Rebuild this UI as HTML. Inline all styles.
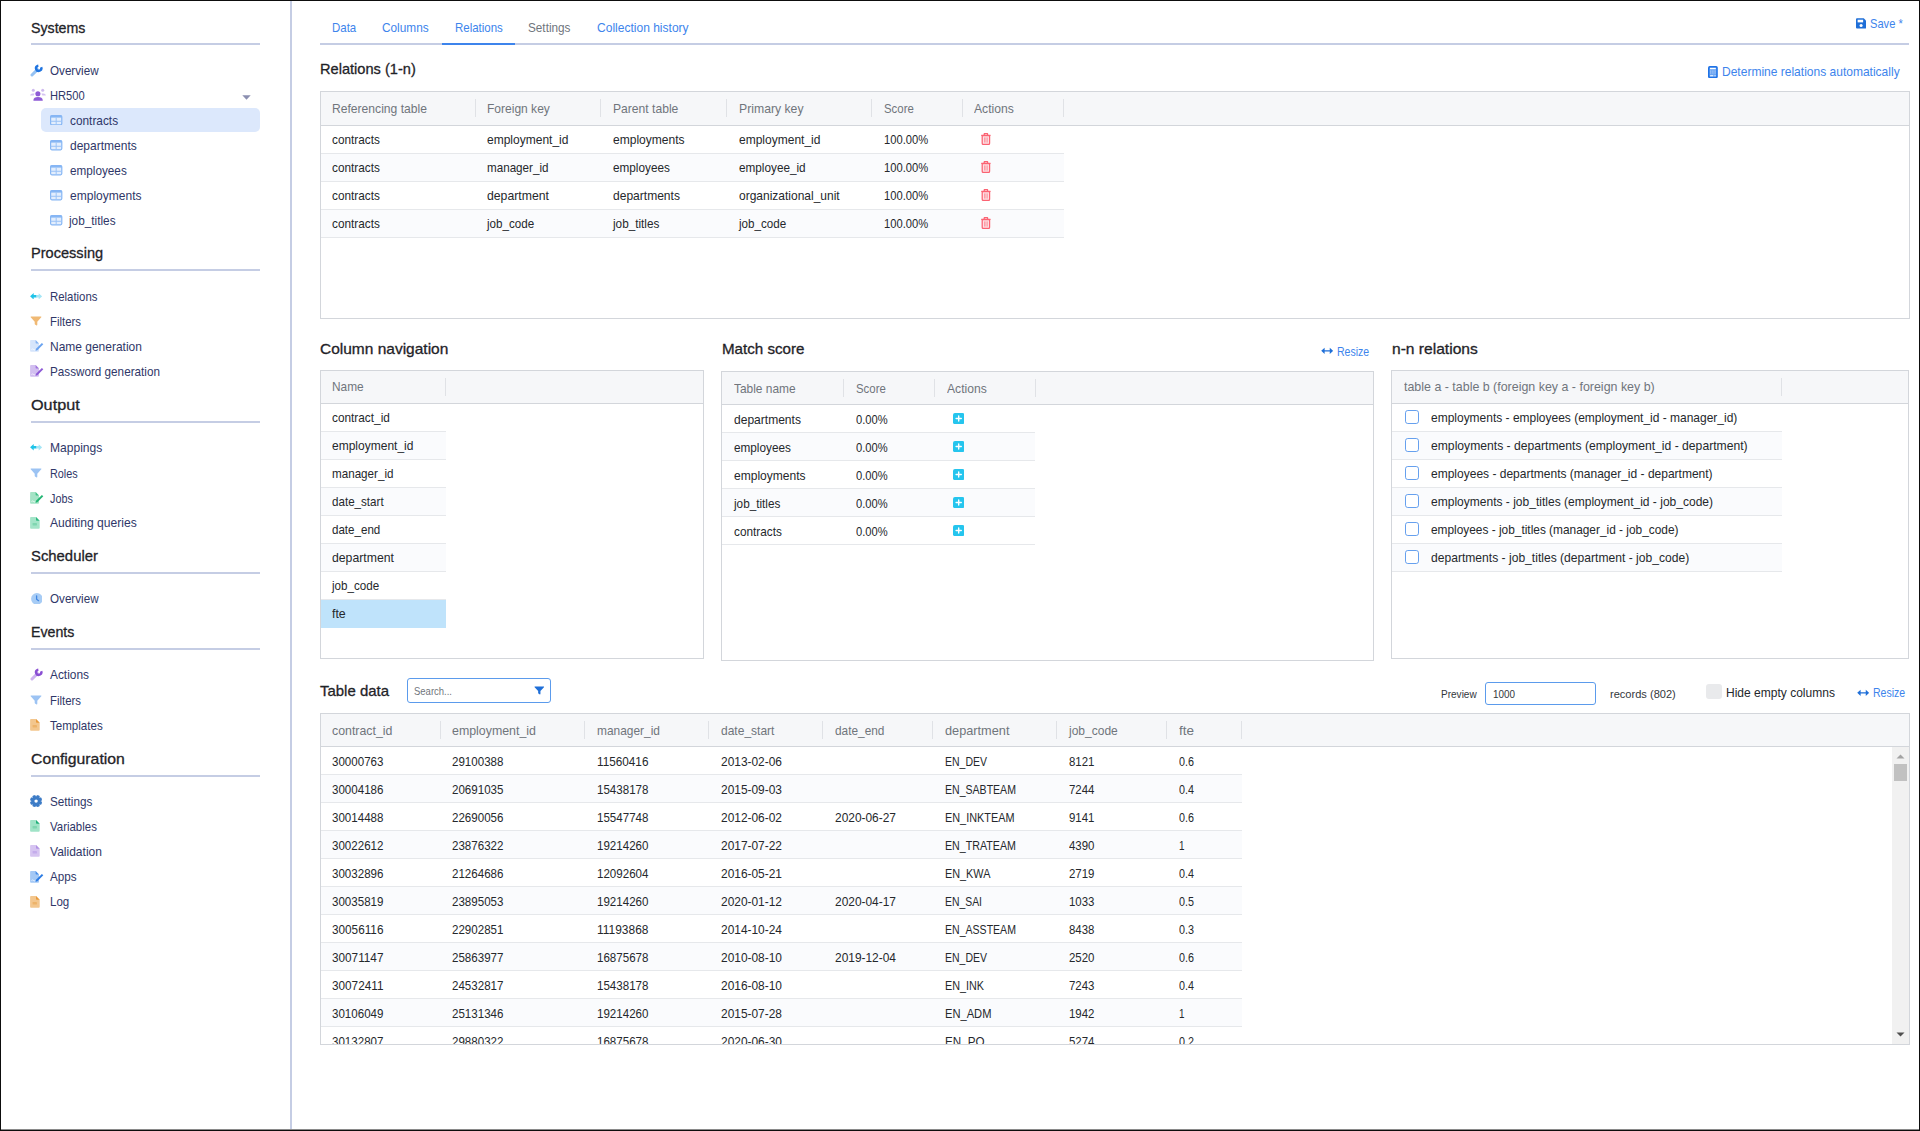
<!DOCTYPE html><html lang="en"><head><meta charset="utf-8"><title>Relations</title><style>
*{box-sizing:border-box;margin:0;padding:0}
html,body{width:1920px;height:1131px;overflow:hidden;background:#fff}
body{position:relative;font-family:"Liberation Sans",sans-serif;font-size:12.7px;color:#222}
.abs,.t,.h,.it,.hd,.c,svg.i{position:absolute}
.t,.h,.it,.hd,.c{transform-origin:0 50%}
.frame{position:absolute;left:0;top:0;width:1920px;height:1131px;border:1px solid #0d0d0d;box-shadow:inset 0 -1px 0 #8a8a8a;z-index:50}
.t{white-space:nowrap;line-height:16px;height:16px}
.h{white-space:nowrap;font-size:15px;line-height:20px;height:20px;color:#1f2328;-webkit-text-stroke:0.3px #1f2328}
.it{white-space:nowrap;line-height:16px;height:16px;color:#2f3768}
.rule{position:absolute;left:31px;width:229px;height:2px;background:#c5cde4}
.grid{position:absolute;border:1px solid #d3d6db;background:#fff;overflow:hidden}
.gh{position:absolute;left:0;top:0;right:0;background:#f6f7f9;border-bottom:1px solid #d3d6db}
.hd{white-space:nowrap;line-height:16px;color:#70757c}
.sep{position:absolute;width:1px;height:18px;background:#e0e2e6;margin-top:-1px}
.row{position:absolute;left:0;height:28px;border-bottom:1px solid #e6e8eb;background:#fff}
.row.alt{background:#fafbfd}
.c{white-space:nowrap;line-height:16px;top:6px;color:#25282c}
</style></head><body>
<div class="abs" style="left:290px;top:0;width:2px;height:1131px;background:#c5cde4"></div>
<div class="h" style="left:31px;top:18px;transform:scaleX(0.9459);">Systems</div>
<div class="rule" style="top:43px"></div>
<div class="abs" style="left:41px;top:107.5px;width:219px;height:24.5px;background:#dce8fc;border-radius:5px"></div>
<svg class="i" style="left:30px;top:63.6px" width="13" height="13" viewBox="0 0 13 13" ><path d="M2 11 L7.4 5.6" stroke="#95c2f3" stroke-width="3" stroke-linecap="round" fill="none"/><circle cx="8.7" cy="4.3" r="2.6" fill="none" stroke="#1f74e0" stroke-width="2.5" stroke-dasharray="12.6 3.74" transform="rotate(-22 8.7 4.3)"/></svg>
<div class="it" style="left:50px;top:62px;transform:translateY(0.6px) scaleX(0.9182);">Overview</div>
<svg class="i" style="left:30px;top:88px" width="16" height="13" viewBox="0 0 16 13" ><circle cx="3.3" cy="2.2" r="1.5" fill="#cfbaef"/><circle cx="12.7" cy="2.2" r="1.5" fill="#cfbaef"/><path d="M0.1 7.4 Q0.3 5.4 2.6 5.4 L4.6 5.4 L3.6 7.4Z" fill="#d5c3f1"/><path d="M15.9 7.4 Q15.7 5.4 13.4 5.4 L11.4 5.4 L12.4 7.4Z" fill="#d5c3f1"/><circle cx="7.9" cy="5.8" r="2.55" fill="#8f5bd6"/><path d="M3.4 12.2 Q3.6 9 8 9 Q12.4 9 12.8 12.2 Q12.8 12.8 12.2 12.8 L4 12.8 Q3.4 12.8 3.4 12.2Z" fill="#8f5bd6"/></svg>
<div class="it" style="left:50px;top:87px;transform:translateY(0.6px) scaleX(0.8777);">HR500</div>
<svg class="i" style="left:241.5px;top:94.8px" width="9" height="5" viewBox="0 0 9 5" ><path d="M0.3 0.2 H8.7 L4.5 4.8Z" fill="#8b8fb0"/></svg>
<svg class="i" style="left:50.2px;top:114.7px" width="12.4" height="10.4" viewBox="0 0 12.4 10.4" ><rect x="0.6" y="0.6" width="11.2" height="9.2" rx="1.2" fill="#e3eefd" stroke="#86b6f4" stroke-width="1.2"/><rect x="0.6" y="0.6" width="11.2" height="2" fill="#86b6f4"/><path d="M6.2 2.6 V9.8 M0.6 6.3 H11.8" stroke="#9cc3f6" stroke-width="1" fill="none"/></svg>
<div class="it" style="left:70px;top:112px;transform:translateY(0.6px) scaleX(0.9335);">contracts</div>
<svg class="i" style="left:50.2px;top:140.2px" width="12.4" height="10.4" viewBox="0 0 12.4 10.4" ><rect x="0.6" y="0.6" width="11.2" height="9.2" rx="1.2" fill="#e3eefd" stroke="#86b6f4" stroke-width="1.2"/><rect x="0.6" y="0.6" width="11.2" height="2" fill="#86b6f4"/><path d="M6.2 2.6 V9.8 M0.6 6.3 H11.8" stroke="#9cc3f6" stroke-width="1" fill="none"/></svg>
<div class="it" style="left:70px;top:138px;transform:translateY(0.1px) scaleX(0.9463);">departments</div>
<svg class="i" style="left:50.2px;top:165.2px" width="12.4" height="10.4" viewBox="0 0 12.4 10.4" ><rect x="0.6" y="0.6" width="11.2" height="9.2" rx="1.2" fill="#e3eefd" stroke="#86b6f4" stroke-width="1.2"/><rect x="0.6" y="0.6" width="11.2" height="2" fill="#86b6f4"/><path d="M6.2 2.6 V9.8 M0.6 6.3 H11.8" stroke="#9cc3f6" stroke-width="1" fill="none"/></svg>
<div class="it" style="left:70px;top:163px;transform:translateY(0.1px) scaleX(0.9248);">employees</div>
<svg class="i" style="left:50.2px;top:190.2px" width="12.4" height="10.4" viewBox="0 0 12.4 10.4" ><rect x="0.6" y="0.6" width="11.2" height="9.2" rx="1.2" fill="#e3eefd" stroke="#86b6f4" stroke-width="1.2"/><rect x="0.6" y="0.6" width="11.2" height="2" fill="#86b6f4"/><path d="M6.2 2.6 V9.8 M0.6 6.3 H11.8" stroke="#9cc3f6" stroke-width="1" fill="none"/></svg>
<div class="it" style="left:70px;top:188px;transform:translateY(0.1px) scaleX(0.948);">employments</div>
<svg class="i" style="left:50.2px;top:215.2px" width="12.4" height="10.4" viewBox="0 0 12.4 10.4" ><rect x="0.6" y="0.6" width="11.2" height="9.2" rx="1.2" fill="#e3eefd" stroke="#86b6f4" stroke-width="1.2"/><rect x="0.6" y="0.6" width="11.2" height="2" fill="#86b6f4"/><path d="M6.2 2.6 V9.8 M0.6 6.3 H11.8" stroke="#9cc3f6" stroke-width="1" fill="none"/></svg>
<div class="it" style="left:69.3px;top:213px;transform:translateY(0.1px) scaleX(0.9297);">job_titles</div>
<div class="h" style="left:31px;top:243px;transform:scaleX(0.9717);">Processing</div>
<div class="rule" style="top:269px"></div>
<svg class="i" style="left:30.2px;top:292.8px" width="12.2" height="6.6" viewBox="0 0 12.2 6.6" ><path d="M0.1 3.3 L3.7 0 V2 H6.6 V4.6 H3.7 V6.6Z" fill="#1fc3e8"/><path d="M12.1 3.3 L8.7 0.2 V2.1 H6.6 V4.5 H8.7 V6.4Z" fill="#a5e6f6"/></svg>
<div class="it" style="left:50px;top:288px;transform:translateY(0.6px) scaleX(0.8971);">Relations</div>
<svg class="i" style="left:30.4px;top:316.2px" width="12" height="10.4" viewBox="0 0 13 12" ><path d="M0.6 0.5 H12.4 Q13 0.9 12.6 1.5 L8 6.6 V10.2 Q7.9 11.6 6.8 10.8 L5.3 9.7 Q5 9.4 5 9 V6.6 L0.4 1.5 Q0 0.9 0.6 0.5Z" fill="#f0b974"/></svg>
<div class="it" style="left:50px;top:314px;transform:translateY(0.1px) scaleX(0.8967);">Filters</div>
<svg class="i" style="left:30.3px;top:340.4px" width="13.4" height="11.8" viewBox="0 0 13.4 11.8" ><path d="M1 0.1 H5.6 L9 3.5 V10.8 Q9 11.7 8.1 11.7 H1 Q0.1 11.7 0.1 10.8 V1 Q0.1 0.1 1 0.1Z" fill="#d6e5fb"/><path d="M5.6 0.1 L9 3.5 H6.4 Q5.6 3.5 5.6 2.7Z" fill="#6aa3f0" opacity="0.75"/><path d="M1.6 9.8 Q2.6 8 3.4 9.4 Q4.2 10.4 5.2 9.4" stroke="#fff" stroke-width="0.8" fill="none" opacity="0.9"/><path d="M11.9 2.9 L13.3 4.3 L7.4 10.2 L5.5 10.7 L6 8.8Z" fill="#6aa3f0"/></svg>
<div class="it" style="left:50px;top:338px;transform:translateY(0.9px) scaleX(0.9443);">Name generation</div>
<svg class="i" style="left:30.3px;top:365px" width="13.4" height="11.8" viewBox="0 0 13.4 11.8" ><path d="M1 0.1 H5.6 L9 3.5 V10.8 Q9 11.7 8.1 11.7 H1 Q0.1 11.7 0.1 10.8 V1 Q0.1 0.1 1 0.1Z" fill="#d2bff0"/><path d="M5.6 0.1 L9 3.5 H6.4 Q5.6 3.5 5.6 2.7Z" fill="#8d59d6" opacity="0.75"/><path d="M1.6 9.8 Q2.6 8 3.4 9.4 Q4.2 10.4 5.2 9.4" stroke="#fff" stroke-width="0.8" fill="none" opacity="0.9"/><path d="M11.9 2.9 L13.3 4.3 L7.4 10.2 L5.5 10.7 L6 8.8Z" fill="#8d59d6"/></svg>
<div class="it" style="left:50px;top:363px;transform:translateY(0.6px) scaleX(0.922);">Password generation</div>
<div class="h" style="left:31px;top:395px;transform:scaleX(1.0815);">Output</div>
<div class="rule" style="top:421px"></div>
<svg class="i" style="left:30.2px;top:444px" width="12.2" height="6.6" viewBox="0 0 12.2 6.6" ><path d="M0.1 3.3 L3.7 0 V2 H6.6 V4.6 H3.7 V6.6Z" fill="#1fc3e8"/><path d="M12.1 3.3 L8.7 0.2 V2.1 H6.6 V4.5 H8.7 V6.4Z" fill="#a5e6f6"/></svg>
<div class="it" style="left:50px;top:439px;transform:translateY(0.9px) scaleX(0.9497);">Mappings</div>
<svg class="i" style="left:30.4px;top:467.6px" width="12" height="10.4" viewBox="0 0 13 12" ><path d="M0.6 0.5 H12.4 Q13 0.9 12.6 1.5 L8 6.6 V10.2 Q7.9 11.6 6.8 10.8 L5.3 9.7 Q5 9.4 5 9 V6.6 L0.4 1.5 Q0 0.9 0.6 0.5Z" fill="#9cc3f3"/></svg>
<div class="it" style="left:50px;top:465px;transform:translateY(0.6px) scaleX(0.8531);">Roles</div>
<svg class="i" style="left:30.3px;top:492px" width="13.4" height="11.8" viewBox="0 0 13.4 11.8" ><path d="M1 0.1 H5.6 L9 3.5 V10.8 Q9 11.7 8.1 11.7 H1 Q0.1 11.7 0.1 10.8 V1 Q0.1 0.1 1 0.1Z" fill="#a5e3c6"/><path d="M5.6 0.1 L9 3.5 H6.4 Q5.6 3.5 5.6 2.7Z" fill="#22b573" opacity="0.75"/><path d="M1.6 9.8 Q2.6 8 3.4 9.4 Q4.2 10.4 5.2 9.4" stroke="#fff" stroke-width="0.8" fill="none" opacity="0.9"/><path d="M11.9 2.9 L13.3 4.3 L7.4 10.2 L5.5 10.7 L6 8.8Z" fill="#22b573"/></svg>
<div class="it" style="left:50px;top:490px;transform:translateY(0.6px) scaleX(0.8499);">Jobs</div>
<svg class="i" style="left:30.4px;top:517px" width="9.8" height="11.8" viewBox="0 0 9.8 11.8" ><path d="M1 0.1 H6 L9.7 3.8 V10.8 Q9.7 11.7 8.8 11.7 H1 Q0.1 11.7 0.1 10.8 V1 Q0.1 0.1 1 0.1Z" fill="#a3e4c8"/><path d="M6 0.1 L9.7 3.8 H6.8 Q6 3.8 6 3Z" fill="#2fb981"/><rect x="2.6" y="6" width="4.4" height="2.4" rx="0.4" fill="#7fd6b0"/></svg>
<div class="it" style="left:50px;top:515px;transform:translateY(0.3px) scaleX(0.9541);">Auditing queries</div>
<div class="h" style="left:31px;top:546px;transform:scaleX(0.9905);">Scheduler</div>
<div class="rule" style="top:572px"></div>
<svg class="i" style="left:30.6px;top:592.7px" width="11.8" height="11.8" viewBox="0 0 12 12" ><circle cx="6" cy="6" r="5.9" fill="#a7ccf5"/><path d="M5.7 2.9 V6.3 L7.7 7.8" stroke="#3f86e4" stroke-width="1.3" fill="none" stroke-linecap="round"/></svg>
<div class="it" style="left:50px;top:590px;transform:translateY(0.6px) scaleX(0.9182);">Overview</div>
<div class="h" style="left:31px;top:622px;transform:scaleX(0.9464);">Events</div>
<div class="rule" style="top:648px"></div>
<svg class="i" style="left:30.4px;top:668.4px" width="13" height="13" viewBox="0 0 13 13" ><path d="M2 11 L7.4 5.6" stroke="#cdb3ee" stroke-width="3" stroke-linecap="round" fill="none"/><circle cx="8.7" cy="4.3" r="2.6" fill="none" stroke="#8a4fd3" stroke-width="2.5" stroke-dasharray="12.6 3.74" transform="rotate(-22 8.7 4.3)"/></svg>
<div class="it" style="left:50px;top:666px;transform:translateY(0.6px) scaleX(0.9364);">Actions</div>
<svg class="i" style="left:30.4px;top:694.6px" width="12" height="10.4" viewBox="0 0 13 12" ><path d="M0.6 0.5 H12.4 Q13 0.9 12.6 1.5 L8 6.6 V10.2 Q7.9 11.6 6.8 10.8 L5.3 9.7 Q5 9.4 5 9 V6.6 L0.4 1.5 Q0 0.9 0.6 0.5Z" fill="#9cc3f3"/></svg>
<div class="it" style="left:50px;top:692px;transform:translateY(0.6px) scaleX(0.8967);">Filters</div>
<svg class="i" style="left:30.4px;top:719.3px" width="9.8" height="11.8" viewBox="0 0 9.8 11.8" ><path d="M1 0.1 H6 L9.7 3.8 V10.8 Q9.7 11.7 8.8 11.7 H1 Q0.1 11.7 0.1 10.8 V1 Q0.1 0.1 1 0.1Z" fill="#f3c68d"/><path d="M6 0.1 L9.7 3.8 H6.8 Q6 3.8 6 3Z" fill="#e89a3c"/><rect x="2.6" y="6" width="4.4" height="2.4" rx="0.4" fill="#edb36a"/></svg>
<div class="it" style="left:50px;top:717px;transform:translateY(0.6px) scaleX(0.9122);">Templates</div>
<div class="h" style="left:31px;top:749px;transform:scaleX(1.0513);">Configuration</div>
<div class="rule" style="top:775px"></div>
<svg class="i" style="left:30.3px;top:795px" width="12.2" height="12.2" viewBox="0 0 12.2 12.2" ><polygon points="11.99,7.25 11.08,9.45 9.43,9.28 9.28,9.43 9.45,11.08 7.25,11.99 6.20,10.70 6.00,10.70 4.95,11.99 2.75,11.08 2.92,9.43 2.77,9.28 1.12,9.45 0.21,7.25 1.50,6.20 1.50,6.00 0.21,4.95 1.12,2.75 2.77,2.92 2.92,2.77 2.75,1.12 4.95,0.21 6.00,1.50 6.20,1.50 7.25,0.21 9.45,1.12 9.28,2.77 9.43,2.92 11.08,2.75 11.99,4.95 10.70,6.00 10.70,6.20" fill="#3d7cc6" stroke="#3d7cc6" stroke-width="0.5" stroke-linejoin="round"/><circle cx="6.1" cy="6.1" r="1.7" fill="#fff"/></svg>
<div class="it" style="left:50px;top:793px;transform:translateY(0.6px) scaleX(0.924);">Settings</div>
<svg class="i" style="left:30.4px;top:820px" width="9.8" height="11.8" viewBox="0 0 9.8 11.8" ><path d="M1 0.1 H6 L9.7 3.8 V10.8 Q9.7 11.7 8.8 11.7 H1 Q0.1 11.7 0.1 10.8 V1 Q0.1 0.1 1 0.1Z" fill="#a0e3c7"/><path d="M6 0.1 L9.7 3.8 H6.8 Q6 3.8 6 3Z" fill="#22b07a"/><rect x="2.6" y="6" width="4.4" height="2.4" rx="0.4" fill="#7fd6b0"/></svg>
<div class="it" style="left:50px;top:818px;transform:translateY(0.6px) scaleX(0.9018);">Variables</div>
<svg class="i" style="left:30.4px;top:845px" width="9.8" height="11.8" viewBox="0 0 9.8 11.8" ><path d="M1 0.1 H6 L9.7 3.8 V10.8 Q9.7 11.7 8.8 11.7 H1 Q0.1 11.7 0.1 10.8 V1 Q0.1 0.1 1 0.1Z" fill="#d6c4f1"/><path d="M6 0.1 L9.7 3.8 H6.8 Q6 3.8 6 3Z" fill="#b192e3"/><rect x="2.6" y="6" width="4.4" height="2.4" rx="0.4" fill="#c4aceb"/></svg>
<div class="it" style="left:50px;top:843px;transform:translateY(0.6px) scaleX(0.9482);">Validation</div>
<svg class="i" style="left:30.4px;top:870.9px" width="13.4" height="11.8" viewBox="0 0 13.4 11.8" ><path d="M1 0.1 H5.6 L9 3.5 V10.8 Q9 11.7 8.1 11.7 H1 Q0.1 11.7 0.1 10.8 V1 Q0.1 0.1 1 0.1Z" fill="#a3c8f5"/><path d="M5.6 0.1 L9 3.5 H6.4 Q5.6 3.5 5.6 2.7Z" fill="#2a7be4" opacity="0.75"/><path d="M1.6 9.8 Q2.6 8 3.4 9.4 Q4.2 10.4 5.2 9.4" stroke="#fff" stroke-width="0.8" fill="none" opacity="0.9"/><path d="M11.9 2.9 L13.3 4.3 L7.4 10.2 L5.5 10.7 L6 8.8Z" fill="#2a7be4"/></svg>
<div class="it" style="left:50px;top:868px;transform:translateY(0.6px) scaleX(0.9189);">Apps</div>
<svg class="i" style="left:30.4px;top:896px" width="9.8" height="11.8" viewBox="0 0 9.8 11.8" ><path d="M1 0.1 H6 L9.7 3.8 V10.8 Q9.7 11.7 8.8 11.7 H1 Q0.1 11.7 0.1 10.8 V1 Q0.1 0.1 1 0.1Z" fill="#f3c68d"/><path d="M6 0.1 L9.7 3.8 H6.8 Q6 3.8 6 3Z" fill="#e89a3c"/><rect x="2.6" y="6" width="4.4" height="2.4" rx="0.4" fill="#edb36a"/></svg>
<div class="it" style="left:50px;top:893px;transform:translateY(0.6px) scaleX(0.9108);">Log</div>
<div class="abs" style="left:320px;top:43px;width:1589px;height:2px;background:#c5cde4"></div>
<div class="abs" style="left:442px;top:43px;width:73px;height:2px;background:#3d84ec"></div>
<div class="t" style="left:331.8px;top:20px;transform:scaleX(0.9021);color:#3d84ec">Data</div>
<div class="t" style="left:381.8px;top:20px;transform:scaleX(0.9319);color:#3d84ec">Columns</div>
<div class="t" style="left:454.8px;top:20px;transform:scaleX(0.9047);color:#3d84ec">Relations</div>
<div class="t" style="left:528.4px;top:20px;transform:scaleX(0.9261);color:#6f757d">Settings</div>
<div class="t" style="left:597px;top:20px;transform:scaleX(0.9483);color:#3d84ec">Collection history</div>
<svg class="i" style="left:1856px;top:18.2px" width="10.2" height="10.8" viewBox="0 0 10 10" ><path d="M1 0 H7.6 L10 2.4 V9 Q10 10 9 10 H1 Q0 10 0 9 V1 Q0 0 1 0Z" fill="#1f6fd8"/><rect x="1.6" y="1.4" width="5.4" height="2.6" fill="#fff"/><circle cx="5" cy="7" r="1.5" fill="#fff"/></svg>
<div class="t" style="left:1869.5px;top:16px;transform:scaleX(0.8766);color:#3d84ec">Save *</div>
<div class="h" style="left:320px;top:59px;transform:scaleX(0.9739);">Relations (1-n)</div>
<svg class="i" style="left:1708.2px;top:65.7px" width="9.8" height="12.2" viewBox="0 0 9.8 12.2" ><rect x="0" y="0" width="9.8" height="12.2" rx="1.7" fill="#1f72e6"/><rect x="1.5" y="1.5" width="6.8" height="9.2" rx="0.4" fill="#6ba5f2"/><rect x="2" y="1.9" width="5.8" height="1.3" fill="#fff"/><path d="M2.7 4.6V8.4M4.9 4.6V8.4M7.1 4.6V8.4" stroke="#cfe1fb" stroke-width="0.9" stroke-dasharray="1 0.9"/><rect x="2" y="9.3" width="3.4" height="1" rx="0.5" fill="#fff"/><rect x="6.4" y="9.3" width="1.3" height="1" rx="0.5" fill="#fff"/></svg>
<div class="t" style="left:1721.5px;top:64px;transform:scaleX(0.947);color:#3d84ec">Determine relations automatically</div>
<div class="grid" style="left:320px;top:91px;width:1590px;height:228px">
<div class="gh" style="height:34px"></div>
<div class="hd" style="left:11.300000000000011px;top:9px;transform:scaleX(0.9543)">Referencing table</div>
<div class="hd" style="left:166.3px;top:9px;transform:scaleX(0.948)">Foreign key</div>
<div class="hd" style="left:291.70000000000005px;top:9px;transform:scaleX(0.9549)">Parent table</div>
<div class="hd" style="left:417.6px;top:9px;transform:scaleX(0.9637)">Primary key</div>
<div class="hd" style="left:563px;top:9px;transform:scaleX(0.8982)">Score</div>
<div class="hd" style="left:653.4px;top:9px;transform:scaleX(0.9556)">Actions</div>
<div class="sep" style="left:154px;top:8px"></div>
<div class="sep" style="left:279px;top:8px"></div>
<div class="sep" style="left:405px;top:8px"></div>
<div class="sep" style="left:550px;top:8px"></div>
<div class="sep" style="left:641px;top:8px"></div>
<div class="sep" style="left:742px;top:8px"></div>
<div class="row" style="top:34px;width:743px;">
<div class="c" style="left:11.300000000000011px;top:6px;transform:scaleX(0.9296)">contracts</div>
<div class="c" style="left:166.3px;top:6px;transform:scaleX(0.9463)">employment_id</div>
<div class="c" style="left:291.70000000000005px;top:6px;transform:scaleX(0.9494)">employments</div>
<div class="c" style="left:417.6px;top:6px;transform:scaleX(0.9463)">employment_id</div>
<div class="c" style="left:563px;top:6px;transform:scaleX(0.8816)">100.00%</div>
<svg class="i" style="left:659.9px;top:7.2px" width="9.8" height="12" viewBox="0 0 9.8 12"><path d="M0.3 2.3 H9.5 M3.2 2.1 V1.1 Q3.2 0.5 3.8 0.5 H6 Q6.6 0.5 6.6 1.1 V2.1" stroke="#fb6373" stroke-width="1.25" fill="none"/><path d="M1.2 2.6 V10.2 Q1.2 11.5 2.5 11.5 H7.3 Q8.6 11.5 8.6 10.2 V2.6Z" fill="#fde3e6" stroke="#fb6373" stroke-width="1.25"/><path d="M3.5 4.4 V9.6 M4.9 4.4 V9.6 M6.3 4.4 V9.6" stroke="#fb8a96" stroke-width="0.8"/></svg>
</div>
<div class="row alt" style="top:62px;width:743px;">
<div class="c" style="left:11.300000000000011px;top:6px;transform:scaleX(0.9296)">contracts</div>
<div class="c" style="left:166.3px;top:6px;transform:scaleX(0.9169)">manager_id</div>
<div class="c" style="left:291.70000000000005px;top:6px;transform:scaleX(0.9265)">employees</div>
<div class="c" style="left:417.6px;top:6px;transform:scaleX(0.9262)">employee_id</div>
<div class="c" style="left:563px;top:6px;transform:scaleX(0.8816)">100.00%</div>
<svg class="i" style="left:659.9px;top:7.2px" width="9.8" height="12" viewBox="0 0 9.8 12"><path d="M0.3 2.3 H9.5 M3.2 2.1 V1.1 Q3.2 0.5 3.8 0.5 H6 Q6.6 0.5 6.6 1.1 V2.1" stroke="#fb6373" stroke-width="1.25" fill="none"/><path d="M1.2 2.6 V10.2 Q1.2 11.5 2.5 11.5 H7.3 Q8.6 11.5 8.6 10.2 V2.6Z" fill="#fde3e6" stroke="#fb6373" stroke-width="1.25"/><path d="M3.5 4.4 V9.6 M4.9 4.4 V9.6 M6.3 4.4 V9.6" stroke="#fb8a96" stroke-width="0.8"/></svg>
</div>
<div class="row" style="top:90px;width:743px;">
<div class="c" style="left:11.300000000000011px;top:6px;transform:scaleX(0.9296)">contracts</div>
<div class="c" style="left:166.3px;top:6px;transform:scaleX(0.9651)">department</div>
<div class="c" style="left:291.70000000000005px;top:6px;transform:scaleX(0.9491)">departments</div>
<div class="c" style="left:417.6px;top:6px;transform:scaleX(0.9454)">organizational_unit</div>
<div class="c" style="left:563px;top:6px;transform:scaleX(0.8816)">100.00%</div>
<svg class="i" style="left:659.9px;top:7.2px" width="9.8" height="12" viewBox="0 0 9.8 12"><path d="M0.3 2.3 H9.5 M3.2 2.1 V1.1 Q3.2 0.5 3.8 0.5 H6 Q6.6 0.5 6.6 1.1 V2.1" stroke="#fb6373" stroke-width="1.25" fill="none"/><path d="M1.2 2.6 V10.2 Q1.2 11.5 2.5 11.5 H7.3 Q8.6 11.5 8.6 10.2 V2.6Z" fill="#fde3e6" stroke="#fb6373" stroke-width="1.25"/><path d="M3.5 4.4 V9.6 M4.9 4.4 V9.6 M6.3 4.4 V9.6" stroke="#fb8a96" stroke-width="0.8"/></svg>
</div>
<div class="row alt" style="top:118px;width:743px;">
<div class="c" style="left:11.300000000000011px;top:6px;transform:scaleX(0.9296)">contracts</div>
<div class="c" style="left:166.3px;top:6px;transform:scaleX(0.9156)">job_code</div>
<div class="c" style="left:291.70000000000005px;top:6px;transform:scaleX(0.9257)">job_titles</div>
<div class="c" style="left:417.6px;top:6px;transform:scaleX(0.9156)">job_code</div>
<div class="c" style="left:563px;top:6px;transform:scaleX(0.8816)">100.00%</div>
<svg class="i" style="left:659.9px;top:7.2px" width="9.8" height="12" viewBox="0 0 9.8 12"><path d="M0.3 2.3 H9.5 M3.2 2.1 V1.1 Q3.2 0.5 3.8 0.5 H6 Q6.6 0.5 6.6 1.1 V2.1" stroke="#fb6373" stroke-width="1.25" fill="none"/><path d="M1.2 2.6 V10.2 Q1.2 11.5 2.5 11.5 H7.3 Q8.6 11.5 8.6 10.2 V2.6Z" fill="#fde3e6" stroke="#fb6373" stroke-width="1.25"/><path d="M3.5 4.4 V9.6 M4.9 4.4 V9.6 M6.3 4.4 V9.6" stroke="#fb8a96" stroke-width="0.8"/></svg>
</div>
</div>
<div class="h" style="left:320px;top:339px;transform:scaleX(1.0327);">Column navigation</div>
<div class="grid" style="left:320px;top:370px;width:384px;height:289px">
<div class="gh" style="height:33px"></div>
<div class="hd" style="left:11.300000000000011px;top:8px;transform:scaleX(0.9357)">Name</div>
<div class="sep" style="left:124px;top:8px"></div>
<div class="row" style="top:33px;width:125px;">
<div class="c" style="left:11.300000000000011px;top:6px;transform:scaleX(0.932)">contract_id</div>
</div>
<div class="row alt" style="top:61px;width:125px;">
<div class="c" style="left:11.300000000000011px;top:6px;transform:scaleX(0.9463)">employment_id</div>
</div>
<div class="row" style="top:89px;width:125px;">
<div class="c" style="left:11.300000000000011px;top:6px;transform:scaleX(0.9169)">manager_id</div>
</div>
<div class="row alt" style="top:117px;width:125px;">
<div class="c" style="left:11.300000000000011px;top:6px;transform:scaleX(0.9154)">date_start</div>
</div>
<div class="row" style="top:145px;width:125px;">
<div class="c" style="left:11.300000000000011px;top:6px;transform:scaleX(0.9118)">date_end</div>
</div>
<div class="row alt" style="top:173px;width:125px;">
<div class="c" style="left:11.300000000000011px;top:6px;transform:scaleX(0.9651)">department</div>
</div>
<div class="row" style="top:201px;width:125px;">
<div class="c" style="left:11.300000000000011px;top:6px;transform:scaleX(0.9156)">job_code</div>
</div>
<div class="row alt" style="top:229px;width:125px;background:#bfe3fb;border-bottom-color:#bfe3fb;">
<div class="c" style="left:11.300000000000011px;top:6px;transform:scaleX(0.9738)">fte</div>
</div>
</div>
<div class="h" style="left:722px;top:339px;transform:scaleX(1.0099);">Match score</div>
<svg class="i" style="left:1321px;top:346.8px" width="12.4" height="7.6" viewBox="0 0 13 8" ><path d="M0.2 4 L3.8 0.7 V3.3 H9.2 V0.7 L12.8 4 L9.2 7.3 V4.7 H3.8 V7.3Z" fill="#1f6fd8"/></svg>
<div class="t" style="left:1337.3px;top:344px;transform:scaleX(0.8295);color:#3d84ec">Resize</div>
<div class="grid" style="left:721px;top:371px;width:653px;height:290px">
<div class="gh" style="height:33px"></div>
<div class="hd" style="left:12.200000000000045px;top:9px;transform:scaleX(0.9397)">Table name</div>
<div class="hd" style="left:133.89999999999998px;top:9px;transform:scaleX(0.8982)">Score</div>
<div class="hd" style="left:225px;top:9px;transform:scaleX(0.9556)">Actions</div>
<div class="sep" style="left:121px;top:8px"></div>
<div class="sep" style="left:212px;top:8px"></div>
<div class="sep" style="left:313px;top:8px"></div>
<div class="row" style="top:33px;width:313px;">
<div class="c" style="left:12.200000000000045px;top:7px;transform:scaleX(0.9491)">departments</div>
<div class="c" style="left:133.89999999999998px;top:7px;transform:scaleX(0.8803)">0.00%</div>
<svg class="i" style="left:230.9px;top:7.9px" width="11.4" height="11.1" viewBox="0 0 11.4 11.1"><rect x="0" y="0" width="11.4" height="11.1" rx="1.9" fill="#25c5ee"/><path d="M5.7 3 V8.1 M3.1 5.55 H8.3" stroke="#fff" stroke-width="1.4" stroke-linecap="round"/></svg>
</div>
<div class="row alt" style="top:61px;width:313px;">
<div class="c" style="left:12.200000000000045px;top:7px;transform:scaleX(0.9265)">employees</div>
<div class="c" style="left:133.89999999999998px;top:7px;transform:scaleX(0.8803)">0.00%</div>
<svg class="i" style="left:230.9px;top:7.9px" width="11.4" height="11.1" viewBox="0 0 11.4 11.1"><rect x="0" y="0" width="11.4" height="11.1" rx="1.9" fill="#25c5ee"/><path d="M5.7 3 V8.1 M3.1 5.55 H8.3" stroke="#fff" stroke-width="1.4" stroke-linecap="round"/></svg>
</div>
<div class="row" style="top:89px;width:313px;">
<div class="c" style="left:12.200000000000045px;top:7px;transform:scaleX(0.9494)">employments</div>
<div class="c" style="left:133.89999999999998px;top:7px;transform:scaleX(0.8803)">0.00%</div>
<svg class="i" style="left:230.9px;top:7.9px" width="11.4" height="11.1" viewBox="0 0 11.4 11.1"><rect x="0" y="0" width="11.4" height="11.1" rx="1.9" fill="#25c5ee"/><path d="M5.7 3 V8.1 M3.1 5.55 H8.3" stroke="#fff" stroke-width="1.4" stroke-linecap="round"/></svg>
</div>
<div class="row alt" style="top:117px;width:313px;">
<div class="c" style="left:12.200000000000045px;top:7px;transform:scaleX(0.9257)">job_titles</div>
<div class="c" style="left:133.89999999999998px;top:7px;transform:scaleX(0.8803)">0.00%</div>
<svg class="i" style="left:230.9px;top:7.9px" width="11.4" height="11.1" viewBox="0 0 11.4 11.1"><rect x="0" y="0" width="11.4" height="11.1" rx="1.9" fill="#25c5ee"/><path d="M5.7 3 V8.1 M3.1 5.55 H8.3" stroke="#fff" stroke-width="1.4" stroke-linecap="round"/></svg>
</div>
<div class="row" style="top:145px;width:313px;">
<div class="c" style="left:12.200000000000045px;top:7px;transform:scaleX(0.9296)">contracts</div>
<div class="c" style="left:133.89999999999998px;top:7px;transform:scaleX(0.8803)">0.00%</div>
<svg class="i" style="left:230.9px;top:7.9px" width="11.4" height="11.1" viewBox="0 0 11.4 11.1"><rect x="0" y="0" width="11.4" height="11.1" rx="1.9" fill="#25c5ee"/><path d="M5.7 3 V8.1 M3.1 5.55 H8.3" stroke="#fff" stroke-width="1.4" stroke-linecap="round"/></svg>
</div>
</div>
<div class="h" style="left:1392px;top:339px;transform:scaleX(1.0394);">n-n relations</div>
<div class="grid" style="left:1391px;top:370px;width:518px;height:289px">
<div class="gh" style="height:33px"></div>
<div class="hd" style="left:12px;top:8px;transform:scaleX(0.9795)">table a - table b (foreign key a - foreign key b)</div>
<div class="sep" style="left:389px;top:8px"></div>
<div class="row" style="top:33px;width:390px;">
<div class="abs" style="left:13px;top:5.7px;width:14.3px;height:14.2px;border:1.6px solid #66a0ee;border-radius:2.8px;background:#fff"></div>
<div class="c" style="left:39px;transform:scaleX(0.9443)">employments - employees (employment_id - manager_id)</div>
</div>
<div class="row alt" style="top:61px;width:390px;">
<div class="abs" style="left:13px;top:5.7px;width:14.3px;height:14.2px;border:1.6px solid #66a0ee;border-radius:2.8px;background:#fff"></div>
<div class="c" style="left:39px;transform:scaleX(0.9573)">employments - departments (employment_id - department)</div>
</div>
<div class="row" style="top:89px;width:390px;">
<div class="abs" style="left:13px;top:5.7px;width:14.3px;height:14.2px;border:1.6px solid #66a0ee;border-radius:2.8px;background:#fff"></div>
<div class="c" style="left:39px;transform:scaleX(0.9463)">employees - departments (manager_id - department)</div>
</div>
<div class="row alt" style="top:117px;width:390px;">
<div class="abs" style="left:13px;top:5.7px;width:14.3px;height:14.2px;border:1.6px solid #66a0ee;border-radius:2.8px;background:#fff"></div>
<div class="c" style="left:39px;transform:scaleX(0.9477)">employments - job_titles (employment_id - job_code)</div>
</div>
<div class="row" style="top:145px;width:390px;">
<div class="abs" style="left:13px;top:5.7px;width:14.3px;height:14.2px;border:1.6px solid #66a0ee;border-radius:2.8px;background:#fff"></div>
<div class="c" style="left:39px;transform:scaleX(0.9357)">employees - job_titles (manager_id - job_code)</div>
</div>
<div class="row alt" style="top:173px;width:390px;">
<div class="abs" style="left:13px;top:5.7px;width:14.3px;height:14.2px;border:1.6px solid #66a0ee;border-radius:2.8px;background:#fff"></div>
<div class="c" style="left:39px;transform:scaleX(0.9533)">departments - job_titles (department - job_code)</div>
</div>
</div>
<div class="h" style="left:320px;top:681px;transform:scaleX(0.9968);">Table data</div>
<div class="abs" style="left:407px;top:678.3px;width:144px;height:24.6px;border:1.5px solid #5b9bec;border-radius:3px;background:#fff"></div>
<div class="t" style="left:414px;top:683px;font-size:10.5px;transform:scaleX(0.9043);color:#70757c">Search...</div>
<svg class="i" style="left:533.7px;top:686.2px" width="10.6" height="9.2" viewBox="0 0 13 12" ><path d="M0.6 0.5 H12.4 Q13 0.9 12.6 1.5 L8 6.6 V10.2 Q7.9 11.6 6.8 10.8 L5.3 9.7 Q5 9.4 5 9 V6.6 L0.4 1.5 Q0 0.9 0.6 0.5Z" fill="#1f6fd8"/></svg>
<div class="t" style="left:1440.5px;top:686px;font-size:11px;transform:scaleX(0.9125);color:#33373c">Preview</div>
<div class="abs" style="left:1485px;top:681.6px;width:111px;height:23px;border:1.5px solid #5b9bec;border-radius:3px;background:#fff"></div>
<div class="t" style="left:1492.5px;top:686px;font-size:11px;transform:scaleX(0.899);color:#33373c">1000</div>
<div class="t" style="left:1610px;top:686px;font-size:11.5px;transform:scaleX(0.9621);color:#33373c">records (802)</div>
<div class="abs" style="left:1706px;top:684px;width:16px;height:15px;border-radius:3px;background:#e9eaec"></div>
<div class="t" style="left:1726px;top:684px;transform:translateY(0.6px) scaleX(0.9474);color:#25282c">Hide empty columns</div>
<svg class="i" style="left:1857px;top:689px" width="12.4" height="7.6" viewBox="0 0 13 8" ><path d="M0.2 4 L3.8 0.7 V3.3 H9.2 V0.7 L12.8 4 L9.2 7.3 V4.7 H3.8 V7.3Z" fill="#1f6fd8"/></svg>
<div class="t" style="left:1872.8px;top:685px;transform:translateY(0.4px) scaleX(0.8295);color:#3d84ec">Resize</div>
<div class="grid" style="left:320px;top:713px;width:1590px;height:332px">
<div class="gh" style="height:33px"></div>
<div class="hd" style="left:11px;top:9px;transform:scaleX(0.9739)">contract_id</div>
<div class="hd" style="left:131.3px;top:9px;transform:scaleX(0.9754)">employment_id</div>
<div class="hd" style="left:276px;top:9px;transform:scaleX(0.9393)">manager_id</div>
<div class="hd" style="left:400px;top:9px;transform:scaleX(0.9472)">date_start</div>
<div class="hd" style="left:514px;top:9px;transform:scaleX(0.9345)">date_end</div>
<div class="hd" style="left:624px;top:9px;transform:scaleX(1.004)">department</div>
<div class="hd" style="left:747.5999999999999px;top:9px;transform:scaleX(0.9466)">job_code</div>
<div class="hd" style="left:857.5px;top:9px;transform:scaleX(1.0624)">fte</div>
<div class="sep" style="left:119px;top:8px"></div>
<div class="sep" style="left:263px;top:8px"></div>
<div class="sep" style="left:387px;top:8px"></div>
<div class="sep" style="left:501px;top:8px"></div>
<div class="sep" style="left:611px;top:8px"></div>
<div class="sep" style="left:735px;top:8px"></div>
<div class="sep" style="left:845px;top:8px"></div>
<div class="sep" style="left:920px;top:8px"></div>
<div class="row" style="top:33px;width:921px;">
<div class="c" style="left:11px;top:7px;transform:scaleX(0.9114)">30000763</div>
<div class="c" style="left:131.3px;top:7px;transform:scaleX(0.9114)">29100388</div>
<div class="c" style="left:276px;top:7px;transform:scaleX(0.9269)">11560416</div>
<div class="c" style="left:400px;top:7px;transform:scaleX(0.939)">2013-02-06</div>
<div class="c" style="left:624px;top:7px;transform:scaleX(0.8264)">EN_DEV</div>
<div class="c" style="left:747.5999999999999px;top:7px;transform:scaleX(0.9026)">8121</div>
<div class="c" style="left:857.5px;top:7px;transform:scaleX(0.8496)">0.6</div>
</div>
<div class="row alt" style="top:61px;width:921px;">
<div class="c" style="left:11px;top:7px;transform:scaleX(0.9114)">30004186</div>
<div class="c" style="left:131.3px;top:7px;transform:scaleX(0.9114)">20691035</div>
<div class="c" style="left:276px;top:7px;transform:scaleX(0.9114)">15438178</div>
<div class="c" style="left:400px;top:7px;transform:scaleX(0.939)">2015-09-03</div>
<div class="c" style="left:624px;top:7px;transform:scaleX(0.8314)">EN_SABTEAM</div>
<div class="c" style="left:747.5999999999999px;top:7px;transform:scaleX(0.9026)">7244</div>
<div class="c" style="left:857.5px;top:7px;transform:scaleX(0.8496)">0.4</div>
</div>
<div class="row" style="top:89px;width:921px;">
<div class="c" style="left:11px;top:7px;transform:scaleX(0.9114)">30014488</div>
<div class="c" style="left:131.3px;top:7px;transform:scaleX(0.9114)">22690056</div>
<div class="c" style="left:276px;top:7px;transform:scaleX(0.9114)">15547748</div>
<div class="c" style="left:400px;top:7px;transform:scaleX(0.939)">2012-06-02</div>
<div class="c" style="left:514px;top:7px;transform:scaleX(0.939)">2020-06-27</div>
<div class="c" style="left:624px;top:7px;transform:scaleX(0.8564)">EN_INKTEAM</div>
<div class="c" style="left:747.5999999999999px;top:7px;transform:scaleX(0.9026)">9141</div>
<div class="c" style="left:857.5px;top:7px;transform:scaleX(0.8496)">0.6</div>
</div>
<div class="row alt" style="top:117px;width:921px;">
<div class="c" style="left:11px;top:7px;transform:scaleX(0.9114)">30022612</div>
<div class="c" style="left:131.3px;top:7px;transform:scaleX(0.9114)">23876322</div>
<div class="c" style="left:276px;top:7px;transform:scaleX(0.9114)">19214260</div>
<div class="c" style="left:400px;top:7px;transform:scaleX(0.939)">2017-07-22</div>
<div class="c" style="left:624px;top:7px;transform:scaleX(0.8408)">EN_TRATEAM</div>
<div class="c" style="left:747.5999999999999px;top:7px;transform:scaleX(0.9026)">4390</div>
<div class="c" style="left:857.5px;top:7px;transform:scaleX(0.7787)">1</div>
</div>
<div class="row" style="top:145px;width:921px;">
<div class="c" style="left:11px;top:7px;transform:scaleX(0.9114)">30032896</div>
<div class="c" style="left:131.3px;top:7px;transform:scaleX(0.9114)">21264686</div>
<div class="c" style="left:276px;top:7px;transform:scaleX(0.9114)">12092604</div>
<div class="c" style="left:400px;top:7px;transform:scaleX(0.939)">2016-05-21</div>
<div class="c" style="left:624px;top:7px;transform:scaleX(0.8558)">EN_KWA</div>
<div class="c" style="left:747.5999999999999px;top:7px;transform:scaleX(0.9026)">2719</div>
<div class="c" style="left:857.5px;top:7px;transform:scaleX(0.8496)">0.4</div>
</div>
<div class="row alt" style="top:173px;width:921px;">
<div class="c" style="left:11px;top:7px;transform:scaleX(0.9114)">30035819</div>
<div class="c" style="left:131.3px;top:7px;transform:scaleX(0.9114)">23895053</div>
<div class="c" style="left:276px;top:7px;transform:scaleX(0.9114)">19214260</div>
<div class="c" style="left:400px;top:7px;transform:scaleX(0.939)">2020-01-12</div>
<div class="c" style="left:514px;top:7px;transform:scaleX(0.939)">2020-04-17</div>
<div class="c" style="left:624px;top:7px;transform:scaleX(0.819)">EN_SAI</div>
<div class="c" style="left:747.5999999999999px;top:7px;transform:scaleX(0.9026)">1033</div>
<div class="c" style="left:857.5px;top:7px;transform:scaleX(0.8496)">0.5</div>
</div>
<div class="row" style="top:201px;width:921px;">
<div class="c" style="left:11px;top:7px;transform:scaleX(0.9269)">30056116</div>
<div class="c" style="left:131.3px;top:7px;transform:scaleX(0.9114)">22902851</div>
<div class="c" style="left:276px;top:7px;transform:scaleX(0.9428)">11193868</div>
<div class="c" style="left:400px;top:7px;transform:scaleX(0.939)">2014-10-24</div>
<div class="c" style="left:624px;top:7px;transform:scaleX(0.8314)">EN_ASSTEAM</div>
<div class="c" style="left:747.5999999999999px;top:7px;transform:scaleX(0.9026)">8438</div>
<div class="c" style="left:857.5px;top:7px;transform:scaleX(0.8496)">0.3</div>
</div>
<div class="row alt" style="top:229px;width:921px;">
<div class="c" style="left:11px;top:7px;transform:scaleX(0.9269)">30071147</div>
<div class="c" style="left:131.3px;top:7px;transform:scaleX(0.9114)">25863977</div>
<div class="c" style="left:276px;top:7px;transform:scaleX(0.9114)">16875678</div>
<div class="c" style="left:400px;top:7px;transform:scaleX(0.939)">2010-08-10</div>
<div class="c" style="left:514px;top:7px;transform:scaleX(0.939)">2019-12-04</div>
<div class="c" style="left:624px;top:7px;transform:scaleX(0.8264)">EN_DEV</div>
<div class="c" style="left:747.5999999999999px;top:7px;transform:scaleX(0.9026)">2520</div>
<div class="c" style="left:857.5px;top:7px;transform:scaleX(0.8496)">0.6</div>
</div>
<div class="row" style="top:257px;width:921px;">
<div class="c" style="left:11px;top:7px;transform:scaleX(0.9269)">30072411</div>
<div class="c" style="left:131.3px;top:7px;transform:scaleX(0.9114)">24532817</div>
<div class="c" style="left:276px;top:7px;transform:scaleX(0.9114)">15438178</div>
<div class="c" style="left:400px;top:7px;transform:scaleX(0.939)">2016-08-10</div>
<div class="c" style="left:624px;top:7px;transform:scaleX(0.8501)">EN_INK</div>
<div class="c" style="left:747.5999999999999px;top:7px;transform:scaleX(0.9026)">7243</div>
<div class="c" style="left:857.5px;top:7px;transform:scaleX(0.8496)">0.4</div>
</div>
<div class="row alt" style="top:285px;width:921px;">
<div class="c" style="left:11px;top:7px;transform:scaleX(0.9114)">30106049</div>
<div class="c" style="left:131.3px;top:7px;transform:scaleX(0.9114)">25131346</div>
<div class="c" style="left:276px;top:7px;transform:scaleX(0.9114)">19214260</div>
<div class="c" style="left:400px;top:7px;transform:scaleX(0.939)">2015-07-28</div>
<div class="c" style="left:624px;top:7px;transform:scaleX(0.8785)">EN_ADM</div>
<div class="c" style="left:747.5999999999999px;top:7px;transform:scaleX(0.9026)">1942</div>
<div class="c" style="left:857.5px;top:7px;transform:scaleX(0.7787)">1</div>
</div>
<div class="row" style="top:313px;width:921px;">
<div class="c" style="left:11px;top:7px;transform:scaleX(0.9114)">30132807</div>
<div class="c" style="left:131.3px;top:7px;transform:scaleX(0.9114)">29880322</div>
<div class="c" style="left:276px;top:7px;transform:scaleX(0.9114)">16875678</div>
<div class="c" style="left:400px;top:7px;transform:scaleX(0.939)">2020-06-30</div>
<div class="c" style="left:624px;top:7px;transform:scaleX(0.9174)">EN_PO</div>
<div class="c" style="left:747.5999999999999px;top:7px;transform:scaleX(0.9026)">5274</div>
<div class="c" style="left:857.5px;top:7px;transform:scaleX(0.8496)">0.2</div>
</div>
<div class="abs" style="left:1571px;top:33px;width:17px;height:298px;background:#f1f1f1"></div>
<div class="abs" style="left:1573px;top:49.5px;width:13px;height:17px;background:#c1c1c1"></div>
<svg class="i" style="left:1575px;top:39.5px" width="9" height="5" viewBox="0 0 9 5"><path d="M0.5 4.6 L4.5 0.4 L8.5 4.6Z" fill="#a3a3a3"/></svg>
<svg class="i" style="left:1575px;top:318px" width="9" height="5" viewBox="0 0 9 5"><path d="M0.5 0.4 L4.5 4.6 L8.5 0.4Z" fill="#505050"/></svg>
</div>
<div class="frame"></div>
</body></html>
